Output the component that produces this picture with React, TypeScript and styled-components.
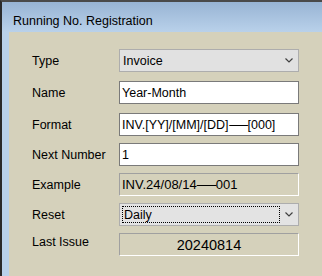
import React from "react";
import styled, { createGlobalStyle } from "styled-components";

const GlobalStyle = createGlobalStyle`
  html, body { margin: 0; padding: 0; width: 322px; height: 276px; overflow: hidden; }
  body { font-family: "Liberation Sans", Arial, sans-serif; font-size: 12.5px; color: #000; }
  * { box-sizing: border-box; }
`;

const Window = styled.div`
  width: 322px;
  height: 276px;
  display: flex;
  flex-direction: column;
  border-top: 2px solid #4a4a4a;
  border-left: 2px solid #2a2a2a;
  background: #b9d1ea;
`;

const TitleBar = styled.div`
  height: 30px;
  flex: none;
  display: flex;
  align-items: center;
  padding: 7px 0 0 11px;
  background: linear-gradient(#98b4d4, #b9d1ea);
  font-size: 12.5px;
  color: #000;
`;

const Body = styled.div`
  flex: 1;
  margin-left: 7px;
  background: #d5d1bb;
  padding: 17px 0 0 23px;
  display: flex;
  flex-direction: column;
`;

const Row = styled.div<{ $space: number }>`
  display: grid;
  grid-template-columns: 87px 180px;
  align-items: center;
  margin-top: ${(p) => p.$space}px;
  height: 23px;
`;

const Label = styled.span<{ $lift?: number }>`
  font-size: 12.5px;
  color: #000;
  position: relative;
  top: ${(p) => -(p.$lift ?? 0)}px;
`;

const Select = styled.div<{ $bg: string }>`
  height: 23px;
  display: flex;
  align-items: center;
  background: ${(p) => p.$bg};
  border: 1px solid #adadad;
  padding-left: 3px;
`;

const SelectText = styled.span`
  flex: 1;
`;

const FocusBox = styled.div`
  flex: 1;
  height: 17px;
  margin-left: -1px;
  display: flex;
  align-items: center;
  padding-left: 1px;
  border: 1px dotted #000;
`;

const Arrow = styled.div`
  width: 18px;
  flex: none;
  display: flex;
  justify-content: center;
  align-items: center;
`;

const Input = styled.div`
  height: 23px;
  display: flex;
  align-items: center;
  background: #fff;
  border: 1px solid #7a7a7a;
  padding-left: 2px;
  white-space: nowrap;
`;

const ReadOnly = styled.div<{ $center?: boolean; $size?: number }>`
  height: 23px;
  display: flex;
  align-items: center;
  justify-content: ${(p) => (p.$center ? "center" : "flex-start")};
  padding-left: ${(p) => (p.$center ? 0 : 2)}px;
  font-size: ${(p) => p.$size ?? 12.5}px;
  background: #d5d1bb;
  border-top: 1px solid #a0a0a0;
  border-left: 1px solid #a0a0a0;
  border-right: 1px solid #fff;
  border-bottom: 1px solid #fff;
  white-space: nowrap;
`;

const Dash = styled.span`
  display: inline-block;
  width: 19px;
  text-align: center;
  transform: scaleX(1.5);
`;

const Chevron = () => (
  <svg width="8" height="5" viewBox="0 0 8 5">
    <path d="M0.5 0.5 L4 4 L7.5 0.5" fill="none" stroke="#404040" strokeWidth="1.2" />
  </svg>
);

export default function App() {
  return (
    <>
      <GlobalStyle />
      <Window>
        <TitleBar>Running No. Registration</TitleBar>
        <Body>
          <Row $space={0}>
            <Label>Type</Label>
            <Select $bg="#e1e1e1">
              <SelectText>Invoice</SelectText>
              <Arrow>
                <Chevron />
              </Arrow>
            </Select>
          </Row>
          <Row $space={9}>
            <Label>Name</Label>
            <Input>Year-Month</Input>
          </Row>
          <Row $space={9}>
            <Label>Format</Label>
            <Input>
              INV.[YY]/[MM]/[DD]<Dash>—</Dash>[000]
            </Input>
          </Row>
          <Row $space={7}>
            <Label>Next Number</Label>
            <Input>1</Input>
          </Row>
          <Row $space={7}>
            <Label>Example</Label>
            <ReadOnly $size={13}>
              INV.24/08/14<Dash>—</Dash>001
            </ReadOnly>
          </Row>
          <Row $space={7}>
            <Label>Reset</Label>
            <Select $bg="#e3e3e3">
              <FocusBox>Daily</FocusBox>
              <Arrow>
                <Chevron />
              </Arrow>
            </Select>
          </Row>
          <Row $space={7}>
            <Label $lift={3}>Last Issue</Label>
            <ReadOnly $center $size={14.5}>
              20240814
            </ReadOnly>
          </Row>
        </Body>
      </Window>
    </>
  );
}
